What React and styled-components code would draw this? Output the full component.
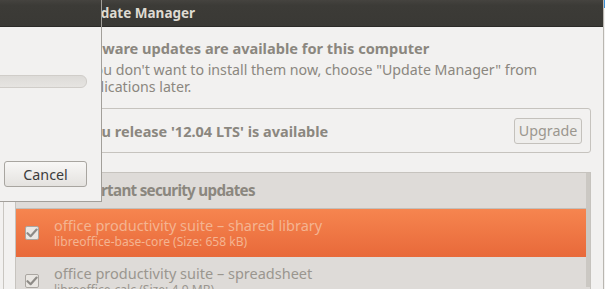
import React from "react";
import styled, { createGlobalStyle } from "styled-components";

const Global = createGlobalStyle`
  html, body {
    margin: 0;
    padding: 0;
    background: #f2f1f0;
    overflow: hidden;
  }
  * { box-sizing: border-box; }
`;

const font = `"Noto Sans", "Open Sans", "DejaVu Sans", sans-serif`;

const Screen = styled.div`
  position: relative;
  width: 605px;
  height: 289px;
  overflow: hidden;
  background: #f2f1f0;
  font-family: ${font};
`;

const Window = styled.div`
  width: 604px;
  height: 289px;
  display: flex;
  flex-direction: column;
  background: #f2f1f0;
  border-right: 1px solid #b9b6b0;
`;

const TitleBar = styled.div`
  height: 27px;
  flex: none;
  display: flex;
  align-items: center;
  padding-left: 82px;
  background: linear-gradient(#45433f, #3c3b37 20%, #3a3935);
  border-bottom: 1px solid #2c2b28;
  color: #dfdbd2;
  font-weight: bold;
  font-size: 13.5px;
`;

const Content = styled.div`
  flex: 1;
  display: flex;
  flex-direction: column;
  padding: 0 12px 0 15px;
`;

const Intro = styled.div`
  display: flex;
  gap: 3px;
  padding-top: 12px;
`;

const IntroIcon = styled.div`
  width: 48px;
  height: 48px;
  flex: none;
  margin-top: 2px;
`;

const IntroText = styled.div`
  display: flex;
  flex-direction: column;
  color: #8b877f;
`;

const Heading = styled.div`
  font-weight: bold;
  font-size: 14.6px;
  line-height: 19px;
  margin-bottom: 3px;
  padding-left: 7px;
`;

const Body = styled.div`
  font-size: 14.2px;
  line-height: 17px;
  padding-left: 8px;
`;

const ReleaseFrame = styled.div`
  margin-top: 13px;
  height: 45px;
  display: flex;
  align-items: center;
  justify-content: space-between;
  padding: 0 8px 0 4px;
  border: 1px solid #c6c3be;
  border-radius: 3px;
  color: #8b877f;
  font-weight: bold;
  font-size: 14.5px;
`;

const Button = styled.button`
  font-family: ${font};
  font-size: 14.3px;
  color: ${(p) => (p.$disabled ? "#9b978f" : "#3c3c3c")};
  height: 26px;
  width: ${(p) => p.$width}px;
  padding: 0;
  border: 1px solid ${(p) => (p.$disabled ? "#c4c1bc" : "#a8a5a0")};
  border-radius: 3px;
  background: ${(p) =>
    p.$disabled ? "#efeeec" : "linear-gradient(#f8f7f6, #e4e2df)"};
`;

const List = styled.div`
  margin-top: 19px;
  flex: 1;
  display: flex;
  background: #dedbd8;
  border: 1px solid #c6c3be;
  border-bottom: none;
`;

const ListBody = styled.div`
  flex: 1;
  display: flex;
  flex-direction: column;
`;

const Scrollbar = styled.div`
  width: 4px;
  flex: none;
  margin-bottom: 18px;
  background: #cbc8c3;
`;

const GroupHeader = styled.div`
  height: 36px;
  padding: 5px 0 0 48px;
  color: #8b877f;
  font-weight: bold;
  font-size: 15.2px;
  letter-spacing: -0.7px;
  line-height: 24px;
  border-bottom: 1px solid #c2bfba;
`;

const Row = styled.div`
  height: 48px;
  display: flex;
  align-items: center;
  gap: 15px;
  padding-left: 9px;
  background: ${(p) =>
    p.$selected ? "linear-gradient(#f6854f, #e8693a)" : "transparent"};
  color: ${(p) => (p.$selected ? "#f4b491" : "#9a968f")};
`;

const Check = styled.div`
  width: 14px;
  height: 14px;
  flex: none;
  margin-top: -1px;
  border: 1px solid #aaa6a1;
  border-radius: 2px;
  background: ${(p) => (p.$selected ? "#ebe7e3" : "#e9e6e2")};
  display: flex;
  align-items: center;
  justify-content: center;
`;

const RowText = styled.div`
  display: flex;
  flex-direction: column;
  margin-top: -2px;
`;

const RowTitle = styled.div`
  font-size: 14.5px;
  line-height: 18px;
`;

const RowSub = styled.div`
  font-size: 12.1px;
  line-height: 15px;
`;

const Dialog = styled.div`
  position: absolute;
  left: -200px;
  top: 0;
  width: 302px;
  height: 202px;
  display: flex;
  flex-direction: column;
  background: #f2f1f0;
  border-right: 1px solid #a29f9a;
  border-bottom: 1px solid #a29f9a;
`;

const DialogTitle = styled.div`
  height: 27px;
  flex: none;
  background: linear-gradient(#45433f, #3c3b37 20%, #3a3935);
  border-bottom: 1px solid #2c2b28;
`;

const DialogBody = styled.div`
  flex: 1;
  display: flex;
  flex-direction: column;
  align-items: flex-end;
  padding: 48px 14px 0 0;
`;

const Progress = styled.div`
  width: 270px;
  height: 13px;
  border: 1px solid #d0cdc9;
  border-radius: 6px;
  background: linear-gradient(#dddbd8, #e6e4e1);
  margin-bottom: 73px;
`;

const Corner = styled.div`
  position: absolute;
  right: 0;
  top: 0;
  width: 1px;
  height: 8px;
  background: #3b8fd6;
`;

const BackEdge = styled.div`
  position: absolute;
  left: 3px;
  top: 202px;
  bottom: 0;
  width: 1px;
  background: #c9c6c1;
`;

const Tick = () => (
  <svg width="12" height="10" viewBox="0 0 12 10">
    <path
      d="M1.5 5.2 L4.6 8.2 L10.6 1.6"
      fill="none"
      stroke="#8e8b87"
      strokeWidth="2.2"
      strokeLinecap="round"
      strokeLinejoin="round"
    />
  </svg>
);

const updates = [
  {
    title: "office productivity suite \u2013 shared library",
    sub: "libreoffice-base-core (Size: 658 kB)",
    selected: true,
  },
  {
    title: "office productivity suite \u2013 spreadsheet",
    sub: "libreoffice-calc (Size: 4.9 MB)",
  },
];

export default function App() {
  return (
    <Screen>
      <Global />
      <Window>
        <TitleBar>Update Manager</TitleBar>
        <Content>
          <Intro>
            <IntroIcon />
            <IntroText>
              <Heading>Software updates are available for this computer</Heading>
              <Body>
                If you don't want to install them now, choose "Update Manager" from
                <br />
                Applications later.
              </Body>
            </IntroText>
          </Intro>
          <ReleaseFrame>
            <span>New Ubuntu release '12.04 LTS' is available</span>
            <Button $disabled $width={68}>
              Upgrade
            </Button>
          </ReleaseFrame>
          <List>
            <ListBody>
              <GroupHeader>Important security updates</GroupHeader>
              {updates.map((u) => (
                <Row key={u.sub} $selected={u.selected}>
                  <Check $selected={u.selected}>
                    <Tick />
                  </Check>
                  <RowText>
                    <RowTitle>{u.title}</RowTitle>
                    <RowSub>{u.sub}</RowSub>
                  </RowText>
                </Row>
              ))}
            </ListBody>
            <Scrollbar />
          </List>
        </Content>
      </Window>
      <BackEdge />
      <Dialog>
        <DialogTitle />
        <DialogBody>
          <Progress />
          <Button $width={83}>Cancel</Button>
        </DialogBody>
      </Dialog>
      <Corner />
    </Screen>
  );
}
